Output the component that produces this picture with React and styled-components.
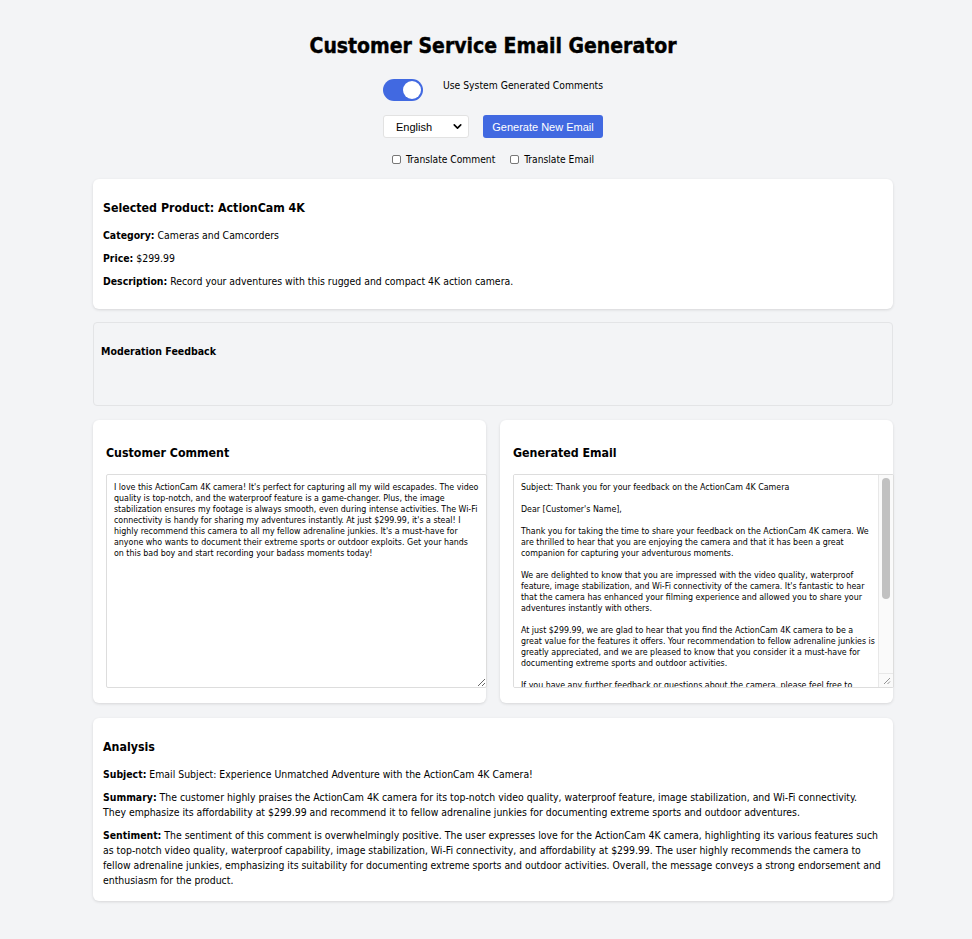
import React, { useState } from 'react';
import styled, { createGlobalStyle } from 'styled-components';
import { ChevronDown } from 'lucide-react';

const GlobalStyle = createGlobalStyle`
   body {
      margin: 0;
      background: #f3f4f6;
      font-family: 'DejaVu Sans Condensed', 'DejaVu Sans', sans-serif;
      color: #000;
   }
`;

const comment =
   "I love this ActionCam 4K camera! It's perfect for capturing all my wild escapades. The video quality is top-notch, and the waterproof feature is a game-changer. Plus, the image stabilization ensures my footage is always smooth, even during intense activities. The Wi-Fi connectivity is handy for sharing my adventures instantly. At just $299.99, it's a steal! I highly recommend this camera to all my fellow adrenaline junkies. It's a must-have for anyone who wants to document their extreme sports or outdoor exploits. Get your hands on this bad boy and start recording your badass moments today!";

const email = `Subject: Thank you for your feedback on the ActionCam 4K Camera

Dear [Customer's Name],

Thank you for taking the time to share your feedback on the ActionCam 4K camera. We are thrilled to hear that you are enjoying the camera and that it has been a great companion for capturing your adventurous moments.

We are delighted to know that you are impressed with the video quality, waterproof feature, image stabilization, and Wi-Fi connectivity of the camera. It's fantastic to hear that the camera has enhanced your filming experience and allowed you to share your adventures instantly with others.

At just $299.99, we are glad to hear that you find the ActionCam 4K camera to be a great value for the features it offers. Your recommendation to fellow adrenaline junkies is greatly appreciated, and we are pleased to know that you consider it a must-have for documenting extreme sports and outdoor activities.

If you have any further feedback or questions about the camera, please feel free to reach out to us. We are always here to help.

Thank you once again for choosing the ActionCam 4K camera. We look forward to being a part of many more of your exciting adventures!

Best regards,
[Your Name]
Customer Service Team`;

const App = () => {
   const [useSystem, setUseSystem] = useState(true);

   return (
      <>
         <GlobalStyle />
         <Page>
            <Container>
               <Title>Customer Service Email Generator</Title>

               <ToggleRow>
                  <Toggle
                     $on={useSystem}
                     onClick={() => setUseSystem(!useSystem)}
                  >
                     <Knob />
                  </Toggle>
                  <ToggleLabel>Use System Generated Comments</ToggleLabel>
               </ToggleRow>

               <Controls>
                  <SelectWrap>
                     <Select defaultValue="English">
                        <option>English</option>
                        <option>Spanish</option>
                        <option>French</option>
                     </Select>
                     <ChevronDown size={13} strokeWidth={3} />
                  </SelectWrap>
                  <Button>Generate New Email</Button>
               </Controls>

               <CheckRow>
                  <CheckLabel>
                     <Check type="checkbox" />
                     Translate Comment
                  </CheckLabel>
                  <CheckLabel>
                     <Check type="checkbox" />
                     Translate Email
                  </CheckLabel>
               </CheckRow>

               <Card>
                  <CardTitle>Selected Product: ActionCam 4K</CardTitle>
                  <Line>
                     <b>Category:</b> Cameras and Camcorders
                  </Line>
                  <Line>
                     <b>Price:</b> $299.99
                  </Line>
                  <Line>
                     <b>Description:</b> Record your adventures with this
                     rugged and compact 4K action camera.
                  </Line>
               </Card>

               <Moderation>
                  <ModTitle>Moderation Feedback</ModTitle>
               </Moderation>

               <Columns>
                  <Panel>
                     <PanelTitle>Customer Comment</PanelTitle>
                     <Field>
                        <TextBox defaultValue={comment} />
                     </Field>
                  </Panel>
                  <Panel>
                     <PanelTitle>Generated Email</PanelTitle>
                     <Field>
                        <TextBox defaultValue={email} readOnly $scroll />
                        {/* scrollbars are hidden in the capture, so draw one */}
                        <Track>
                           <Thumb />
                           <Corner>
                              <svg width="8" height="8" viewBox="0 0 8 8">
                                 <path
                                    d="M7 1 L1 7 M7 4.5 L4.5 7"
                                    stroke="#888"
                                    strokeWidth="0.9"
                                 />
                              </svg>
                           </Corner>
                        </Track>
                     </Field>
                  </Panel>
               </Columns>

               <Card $bottom>
                  <CardTitle>Analysis</CardTitle>
                  <Line>
                     <b>Subject:</b> Email Subject: Experience Unmatched
                     Adventure with the ActionCam 4K Camera!
                  </Line>
                  <Line>
                     <b>Summary:</b> The customer highly praises the ActionCam
                     4K camera for its top-notch video quality, waterproof
                     feature, image stabilization, and Wi-Fi connectivity. They
                     emphasize its affordability at $299.99 and recommend it to
                     fellow adrenaline junkies for documenting extreme sports
                     and outdoor adventures.
                  </Line>
                  <Line>
                     <b>Sentiment:</b> The sentiment of this comment is
                     overwhelmingly positive. The user expresses love for the
                     ActionCam 4K camera, highlighting its various features
                     such as top-notch video quality, waterproof capability,
                     image stabilization, Wi-Fi connectivity, and affordability
                     at $299.99. The user highly recommends the camera to
                     fellow adrenaline junkies, emphasizing its suitability for
                     documenting extreme sports and outdoor activities.
                     Overall, the message conveys a strong endorsement and
                     enthusiasm for the product.
                  </Line>
               </Card>
            </Container>
         </Page>
      </>
   );
};

export default App;

const Page = styled.div`
   padding: 32px 0 38px 14px;
`;

const Container = styled.main`
   max-width: 800px;
   margin: 0 auto;
   display: flex;
   flex-direction: column;
`;

const Title = styled.h1`
   margin: 0;
   text-align: center;
   font-size: 21px;
   line-height: 29px;
   font-weight: 700;
   -webkit-text-stroke: 0.4px #000;
`;

const ToggleRow = styled.div`
   display: flex;
   justify-content: center;
   align-items: flex-start;
   gap: 20px;
   margin-top: 18px;
`;

const Toggle = styled.button`
   width: 40px;
   height: 22px;
   border: none;
   border-radius: 11px;
   padding: 2px;
   background: ${(p) => (p.$on ? '#4169e1' : '#ccc')};
   display: flex;
   justify-content: ${(p) => (p.$on ? 'flex-end' : 'flex-start')};
   cursor: pointer;
`;

const Knob = styled.span`
   width: 18px;
   height: 18px;
   border-radius: 50%;
   background: #fff;
`;

const ToggleLabel = styled.span`
   font-size: 10.3px;
   line-height: 13px;
`;

const Controls = styled.div`
   display: flex;
   justify-content: center;
   gap: 14px;
   margin-top: 14px;
`;

const SelectWrap = styled.div`
   position: relative;
   width: 86px;
   height: 23px;
   svg {
      position: absolute;
      right: 5px;
      top: 5px;
      pointer-events: none;
   }
`;

const Select = styled.select`
   appearance: none;
   width: 100%;
   height: 100%;
   border: 1px solid #e2e2e2;
   border-radius: 3px;
   background: #fff;
   font-family: 'Liberation Sans', Arial, sans-serif;
   font-size: 11px;
   padding: 0 0 0 12px;
   color: #000;
`;

const Button = styled.button`
   width: 120px;
   height: 23px;
   border: none;
   border-radius: 3px;
   background: #4169e1;
   color: #fff;
   font-family: 'Liberation Sans', Arial, sans-serif;
   font-size: 11px;
   cursor: pointer;
`;

const CheckRow = styled.div`
   display: flex;
   justify-content: center;
   gap: 15px;
   margin-top: 15px;
`;

const CheckLabel = styled.label`
   display: flex;
   align-items: center;
   gap: 5px;
   font-size: 10.2px;
   line-height: 13px;
`;

const Check = styled.input`
   appearance: none;
   margin: 0;
   width: 9px;
   height: 9px;
   border: 1px solid #777;
   border-radius: 2px;
   background: #fff;
`;

const Card = styled.section`
   background: #fff;
   border-radius: 6px;
   box-shadow: 0 1px 3px rgba(0, 0, 0, 0.12);
   padding: ${(p) => (p.$bottom ? '10px 12px 5px 10px' : '10px 12px 12px 10px')};
   margin-top: ${(p) => (p.$bottom ? '15px' : '13px')};
`;

const CardTitle = styled.h3`
   margin: 11px 0 11px;
   font-size: 12.3px;
   line-height: 17px;
`;

const Line = styled.p`
   margin: 8px 0;
   font-size: 10.4px;
   line-height: 15px;
`;

const Moderation = styled.section`
   margin-top: 13px;
   height: 84px;
   box-sizing: border-box;
   border: 1px solid #e3e4e6;
   border-radius: 4px;
   background: #f3f4f6;
   padding: 22px 7px;
`;

const ModTitle = styled.h4`
   margin: 0;
   font-size: 10.5px;
   line-height: 13px;
`;

const Columns = styled.div`
   display: grid;
   grid-template-columns: 1fr 1fr;
   gap: 14px;
   margin-top: 14px;
`;

const Panel = styled.section`
   background: #fff;
   border-radius: 6px;
   box-shadow: 0 1px 3px rgba(0, 0, 0, 0.12);
   padding: 13px 13px 15px;
`;

const PanelTitle = styled.h3`
   margin: 12px 0 12px;
   font-size: 12.3px;
   line-height: 17px;
`;

const Field = styled.div`
   position: relative;
   width: calc(100% + 14px);
`;

const TextBox = styled.textarea`
   display: block;
   box-sizing: border-box;
   width: 100%;
   height: 214px;
   margin: 0;
   padding: 7px ${(p) => (p.$scroll ? '17px' : '7px')} 7px 7px;
   border: 1px solid #ddd;
   border-radius: 2px;
   font-family: 'DejaVu Sans Condensed', 'DejaVu Sans', sans-serif;
   font-size: 8.8px;
   line-height: 11px;
   color: #000;
   resize: ${(p) => (p.$scroll ? 'none' : 'both')};
   scrollbar-width: none;
   outline: none;
`;

const Track = styled.div`
   position: absolute;
   top: 1px;
   right: 1px;
   bottom: 1px;
   width: 14px;
   background: #fafafa;
   border-left: 1px solid #e8e8e8;
`;

const Thumb = styled.div`
   position: absolute;
   top: 3px;
   left: 3px;
   width: 8px;
   height: 121px;
   border-radius: 4px;
   background: #c1c1c1;
`;

const Corner = styled.div`
   position: absolute;
   left: 0;
   right: 0;
   bottom: 0;
   height: 14px;
   border-top: 1px solid #e8e8e8;
   display: flex;
   align-items: flex-end;
   justify-content: flex-end;
   padding: 0 2px 2px 0;
   box-sizing: border-box;
`;
